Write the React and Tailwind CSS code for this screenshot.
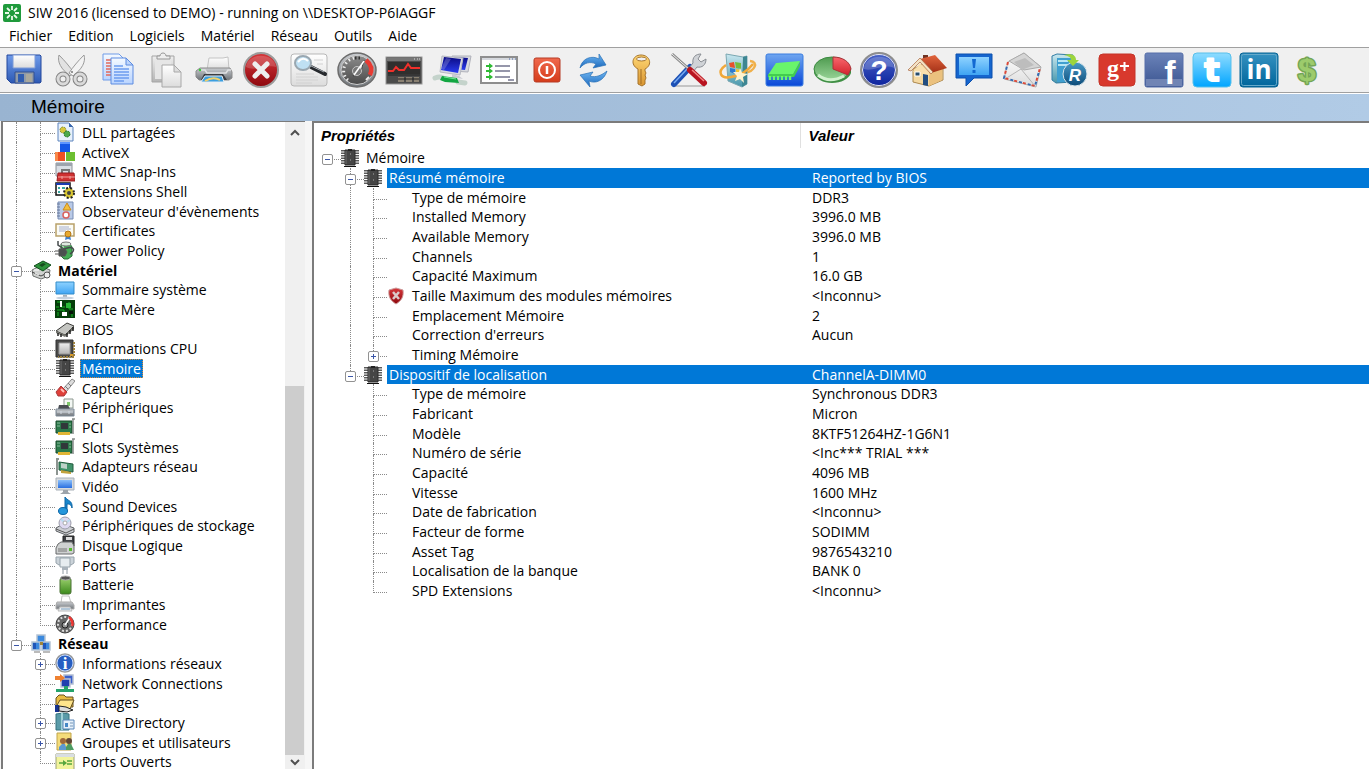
import { useState } from "react";

const toolbarIcons = [
  {
    label: "Enregistrer",
    art: (
      <>
        <path d="M3 3h33l1 1v26l-1 1H7l-4-4z" fill="url(#blue)" stroke="#23479c" />
        <path d="M9 3h22v13H9z" fill="url(#paper)" stroke="#7d9ad6" />
        <path d="M11 20h19v11H11z" fill="#8f9aa8" stroke="#33518f" />
        <path d="M14 22h6v8h-6z" fill="#2f5cb0" />
        <path d="M22 22h6v8h-6z" fill="#a9a89c" />
      </>
    ),
  },
  {
    label: "Couper",
    art: (
      <>
        <path d="M7 3c-2 7 2 14 11 21l4-3C18 15 13 9 7 3z" fill="#e2e2e2" stroke="#9a9a9a" />
        <path d="M32 3c2 7-2 14-11 21l-4-3C21 15 26 9 32 3z" fill="#f3f3f3" stroke="#9a9a9a" />
        <circle cx="11" cy="27" r="5" fill="none" stroke="#858585" strokeWidth="5" />
        <circle cx="11" cy="27" r="5" fill="none" stroke="#dadada" strokeWidth="3" />
        <circle cx="28" cy="27" r="5" fill="none" stroke="#858585" strokeWidth="5" />
        <circle cx="28" cy="27" r="5" fill="none" stroke="#dadada" strokeWidth="3" />
        <circle cx="20" cy="20" r="1" fill="#777" />
      </>
    ),
  },
  {
    label: "Copier",
    art: (
      <>
        <path d="M4 2h16l5 5v21H4z" fill="url(#sheet)" stroke="#6f9be8" />
        <path d="M7 8h7M7 11h5M7 14h5M7 17h5M7 20h5M7 23h5" stroke="#e2695c" strokeWidth="1.5" />
        <path d="M12 6h15l7 7v19H12z" fill="url(#sheet)" stroke="#5c8be0" />
        <path d="M27 6v7h7z" fill="#bcd4fb" stroke="#5c8be0" />
        <path d="M15 14h9M15 17h15M15 20h15M15 23h15M15 26h15M15 29h10" stroke="#6c9cf0" strokeWidth="1.3" />
      </>
    ),
  },
  {
    label: "Coller",
    art: (
      <>
        <path d="M5 4h22v26H5z" fill="url(#silver)" stroke="#a5a5a5" />
        <path d="M8 7h16v20H8z" fill="#e6e6e6" />
        <path d="M10 7V4h3c0-4 6-4 6 0h4v3z" fill="#eee" stroke="#979797" />
        <path d="M15 13h12l7 7v15H15z" fill="url(#paper)" stroke="#a8a8a8" />
        <path d="M27 13v7h7z" fill="#ddd" stroke="#a8a8a8" />
      </>
    ),
  },
  {
    label: "Imprimer",
    art: (
      <>
        <path d="M13 18 15 6h14l5-1 1 13z" fill="url(#paper)" stroke="#c4c4c4" />
        <path d="M6 16h30l2 4v6l-3 2H5l-3-3v-6z" fill="url(#steel)" stroke="#8b8b8b" />
        <path d="M5 18h6l2 3h19l2-3h3" fill="none" stroke="#dfe1e3" strokeWidth="1.5" />
        <path d="M10 22h19l4 6H7z" fill="#3a3e44" />
        <path d="M11 24h17l2 6H7z" fill="#3c9fe0" stroke="#e5edf5" />
        <path d="M11 29q8-5 15-1" stroke="#f0cf6a" strokeWidth="2" fill="none" />
        <circle cx="6" cy="18" r="1.2" fill="#32d232" />
      </>
    ),
  },
  {
    label: "Arrêter",
    art: (
      <>
        <circle cx="19" cy="18" r="17" fill="url(#darkred)" stroke="#9c9c9c" strokeWidth="2" />
        <path d="M4 15C6 0 32 0 34 15 25 12 13 20 4 15z" fill="#fff" opacity=".18" />
        <path d="m13 12 12 12M25 12 13 24" stroke="#eee" strokeWidth="5" strokeLinecap="round" />
      </>
    ),
  },
  {
    label: "Rechercher",
    art: (
      <>
        <rect x="2" y="2" width="36" height="32" rx="3" fill="url(#paper)" stroke="#b7b7b7" />
        <path d="M7 22h18M7 25h22M7 28h22M7 31h16M25 8h9M28 12h6" stroke="#d2d2d2" />
        <path d="m22 15 14 7" stroke="#26292d" strokeWidth="4" strokeLinecap="round" />
        <path d="m20 13 15 7" stroke="#a3aab0" />
        <ellipse cx="14" cy="11" rx="8" ry="7" fill="#bfe0f3" stroke="#9aa7b0" strokeWidth="2" />
        <path d="M9 10q5-6 10-1" stroke="#fff" strokeWidth="2" fill="none" />
      </>
    ),
  },
  {
    label: "Benchmark",
    art: (
      <>
        <ellipse cx="20" cy="18" rx="19" ry="17" fill="url(#steel)" stroke="#6c6c6c" strokeWidth="1.5" />
        <ellipse cx="20" cy="18" rx="16" ry="14.5" fill="url(#dial)" stroke="#cfcfcf" />
        <path d="M11 28C4 23 5 9 17 6" fill="none" stroke="#ededed" strokeWidth="3" strokeDasharray="1.5 3" />
        <path d="M18 6h7" stroke="#333" strokeWidth="3" strokeDasharray="1.5 2" />
        <path d="M29 8q8 7 4 15" fill="none" stroke="#e83a32" strokeWidth="4.5" />
        <path d="M29 28l3-3" stroke="#ededed" strokeWidth="2" />
        <path d="m16 24 11-16-4 15z" fill="#fff" stroke="#444" />
        <circle cx="20" cy="19" r="4.5" fill="#777" stroke="#c5c5c5" />
        <path d="m17 23 10-14" stroke="#fff" strokeWidth="1.5" />
      </>
    ),
  },
  {
    label: "Moniteur",
    art: (
      <>
        <rect x="2" y="5" width="36" height="27" fill="#4b4b4b" stroke="#979797" />
        <path d="M3 6h34v3H3z" fill="#777" />
        <path d="M30 7h1M33 7h1M35 7h1" stroke="#ddd" />
        <path d="M4 10h32v12H4z" fill="#302f2e" />
        <path d="M4 19h5l3-4 3 3h5l4-6 3 4h9" stroke="#f0302b" strokeWidth="2" fill="none" />
        <path d="M14 25h6v5h-6zM22 25h6v5h-6zM30 25h5v5h-5z" fill="#8a8172" />
        <path d="M4 23h32M14 27h21" stroke="#222" />
      </>
    ),
  },
  {
    label: "Réseau local",
    art: (
      <>
        <path d="M20 4 39 4l-3 16-16-1z" fill="#d7d9df" stroke="#b0b2ba" />
        <path d="m22 5 14 1-3 12-11-1z" fill="url(#navy)" />
        <path d="m10 4 21 2-3 17-20-3z" fill="#d7d9e1" stroke="#b7b9c2" />
        <path d="m12 5 17 2-3 14-17-3z" fill="url(#navy)" />
        <path d="m14 6 5 1-7 11-3-1z" fill="#fff" opacity=".2" />
        <path d="m20 22 7 2 4 3-11-2z" fill="#c8cad2" />
        <path d="M3 26q5-2 8 0M26 30l7 1" stroke="#c4d3cb" strokeWidth="5" fill="none" strokeLinecap="round" />
        <path d="m10 24 15 2 2 5-14-1-5-2z" fill="#12a642" />
        <path d="m12 25 12 2" stroke="#74e693" />
      </>
    ),
  },
  {
    label: "Liste",
    art: (
      <>
        <rect x="2" y="5" width="36" height="26" fill="#fff" stroke="#8e8e8e" strokeWidth="2" />
        <path d="M3 6h34v2H3z" fill="#d6d9de" />
        <path d="M30 7h1M33 7h1M36 7h1" stroke="#4b67a0" />
        <path d="M16 14h15M16 19h15M16 25h15M29 28h6" stroke="#73748f" strokeWidth="1.5" />
        <path d="M7 14h5M7 19h5M7 25h5" stroke="#2fba34" strokeWidth="2" />
        <path d="m10 11 4 3-4 3zm0 5 4 3-4 3zm0 6 4 3-4 3z" fill="#2fba34" />
      </>
    ),
  },
  {
    label: "Éteindre",
    art: (
      <>
        <rect x="7" y="6" width="26" height="24" rx="2" fill="url(#orange)" stroke="#b63b24" />
        <circle cx="20" cy="18" r="8" fill="none" stroke="#fff" strokeWidth="2" />
        <path d="M20 14v8" stroke="#fff" strokeWidth="2.5" />
      </>
    ),
  },
  {
    label: "Actualiser",
    art: (
      <>
        <path d="M6 16C8 6 18 3 25 7V2l7 11-13 3 3-4c-6-3-12-1-16 4z" fill="url(#sky)" stroke="#2870b6" strokeWidth=".7" />
        <path d="M33 19c-3 10-12 13-18 10l1 6L6 23l13-3-3 4c6 2 12-1 17-5z" fill="url(#sky)" stroke="#2870b6" strokeWidth=".7" />
      </>
    ),
  },
  {
    label: "Clé",
    art: (
      <>
        <path
          d="M16 17c-8-4-6-14 3-14s12 10 4 14v2l1 2-1 2 1 3-1 2v4l-3 2-4-2z"
          fill="url(#gold)"
          stroke="#a6742c"
        />
        <ellipse cx="19.500" cy="7" rx="5" ry="2" fill="#f0f0f0" stroke="#a6742c" />
        <path d="M19 17v15" stroke="#9f6d26" />
      </>
    ),
  },
  {
    label: "Outils",
    art: (
      <>
        <path d="M6 34h30" stroke="#c4c4c4" strokeWidth="2" />
        <path d="m5 32 16-17" stroke="#1d51b5" strokeWidth="6" strokeLinecap="round" />
        <path d="m5 31 14-15" stroke="#75aaf1" strokeWidth="1.5" />
        <path d="m20 16 4-5c-1-6 3-9 8-9l-3 5 3 3 5-3c0 6-4 9-9 8l-4 5z" fill="#d0d3d7" stroke="#8a8e94" />
        <path d="m3 2 18 16" stroke="#888" strokeWidth="3" />
        <path d="m3 2 18 16" stroke="#eee" />
        <path d="m21 18 14 13" stroke="#b81420" strokeWidth="6" strokeLinecap="round" />
        <path d="m23 18 12 11" stroke="#f18a87" strokeWidth="1.5" />
      </>
    ),
  },
  {
    label: "Logiciel",
    art: (
      <>
        <path d="M33 9C42 10 38 19 28 21" fill="none" stroke="#f0b04a" strokeWidth="2.5" />
        <path d="m9 2 17 3 4-1v28l-5 3-14-6z" fill="url(#teal)" stroke="#7aa7b1" />
        <path d="m26 5 4-1v28l-5 3z" fill="#3d8692" />
        <path d="m12 11 5-1 1 6-5-1z" fill="#e7512c" />
        <path d="m18 10 6 1v6l-5-1z" fill="#75bd3c" />
        <path d="m13 16 5 1v5l-5-2z" fill="#2d79d0" />
        <path d="m19 17 5 1v6l-5-2z" fill="#f3c332" />
        <path d="M9 13C-1 20 4 27 14 25c8-1 15-4 22-13" fill="none" stroke="#f0a83a" strokeWidth="2.5" />
        <path d="m23 16 2 5 6 1-5 3 1 6-4-4-5 2 2-5-4-4h6z" fill="#fff3cf" />
      </>
    ),
  },
  {
    label: "Mémoire",
    art: (
      <>
        <rect x="2" y="2" width="37" height="32" rx="2" fill="url(#royal)" stroke="#3b7de0" />
        <path d="m12 11 24-2-7 14H4z" fill="#69f56b" />
        <path d="M4 22h25l7-12v4l-6 11H4z" fill="#43cc4f" />
        <path d="M6 24v4M10 24v4M14 24v4M18 24v4M22 24v4M26 24v4" stroke="#6cf66c" strokeWidth="2.5" />
      </>
    ),
  },
  {
    label: "Statistiques",
    art: (
      <>
        <path d="M2 17v4c2 6 9 10 18 10s17-4 19-10v-4z" fill="#3f8f44" />
        <ellipse cx="20" cy="17" rx="18" ry="12" fill="url(#leaf)" stroke="#3b8a40" />
        <path d="M21 17V5c10 0 17 5 18 12l-3 6z" fill="url(#red)" stroke="#a9333a" />
        <path d="M6 23q11 9 26 1" fill="none" stroke="#d2f2cf" strokeWidth="3" />
      </>
    ),
  },
  {
    label: "Aide",
    art: (
      <>
        <ellipse cx="20" cy="18" rx="18" ry="17" fill="url(#navyball)" stroke="#8d8d8d" strokeWidth="2" />
        <ellipse cx="20" cy="18" rx="16.500" ry="15.500" fill="none" stroke="#e7e7ef" />
        <path d="M5 17C6 1 34 1 35 16 25 11 14 20 5 17z" fill="#fff" opacity=".2" />
        <text x="20" y="28" textAnchor="middle" fontSize="28" fontWeight="700" fontFamily="Liberation Sans" fill="#fff">?</text>
      </>
    ),
  },
  {
    label: "Accueil",
    art: (
      <>
        <path d="M6 17v13l16 4 14-6V16L24 8z" fill="#f5d9a2" stroke="#ad8950" />
        <path d="m22 20 13-5v13l-13 6z" fill="#ebc17e" />
        <path d="M16 3h5v8h-5z" fill="#703322" />
        <path d="m13 7 15-4 12 13-16 5z" fill="url(#roof)" />
        <path d="M13 6 1 18l3 1 9-9 11 12 2-2z" fill="#f3e2c4" stroke="#a9653f" strokeWidth=".7" />
        <path d="m13 11 10 12-17-3z" fill="#f8dfae" />
        <path d="m16 22 5 1v11l-5-1z" fill="#234e81" />
        <path d="M8 20h5v4H8z" fill="#294c6b" stroke="#fff" />
      </>
    ),
  },
  {
    label: "Commentaires",
    art: (
      <>
        <path d="M2 2h36v24H20l-8 8v-8H2z" fill="#1565ce" stroke="#0c50ad" />
        <path d="M5 5h30v18H5z" fill="url(#cyan)" />
        <path d="M18 7h4l-1 9h-2zM18.500 18h3v3h-3z" fill="#1269d2" />
      </>
    ),
  },
  {
    label: "Courriel",
    art: (
      <>
        <path d="m22 1 17 14-5 20L2 27 6 10z" fill="url(#paper)" stroke="#b0b0b0" />
        <path d="m22 1 17 14-17 3L7 9z" fill="#d5d5d5" stroke="#aaa" />
        <path d="m12 10 11-4 9 7-12 5z" fill="#bdbdbd" />
        <path d="M3 27 19 17l14 17" stroke="#b5b5b5" fill="none" />
        <path d="m6 10-4 16 31 8 5-18" fill="none" stroke="#dc4938" strokeWidth="2" strokeDasharray="3 6" />
        <path d="m6 10-4 16 31 8 5-18" fill="none" stroke="#346bb2" strokeWidth="2" strokeDasharray="3 6" strokeDashoffset="4" />
      </>
    ),
  },
  {
    label: "Registre",
    art: (
      <>
        <path d="m3 4 5-2 16 1v27l-17 1-4-3z" fill="url(#teal)" stroke="#327da4" />
        <path d="M8 6h14v24H8z" fill="#3f9fd0" />
        <path d="M9 9h10M9 13h10" stroke="#b6e6f5" strokeWidth="2" />
        <circle cx="26" cy="22" r="12" fill="url(#ocean)" stroke="#d7e3e9" />
        <text x="26" y="29" textAnchor="middle" fontSize="17" fontStyle="italic" fontWeight="700" fontFamily="Liberation Sans" fill="#fff">
          R
        </text>
        <path d="M15 3c9-2 12 1 12 5h3l-6 6-6-6h4c0-3-3-4-7-5z" fill="#9cd43d" />
      </>
    ),
  },
  {
    label: "Google+",
    art: (
      <>
        <rect x="2" y="2" width="36" height="32" rx="4" fill="#d8392d" stroke="#c43428" />
        <text x="16" y="24" textAnchor="middle" fontSize="24" fontFamily="Liberation Serif" fontWeight="700" fill="#fff">
          g
        </text>
        <path d="M23 14h9M27.500 10v9" stroke="#fff" strokeWidth="2" />
      </>
    ),
  },
  {
    label: "Facebook",
    art: (
      <>
        <rect x="1" y="1" width="38" height="34" rx="2" fill="url(#fb)" stroke="#566fa9" />
        <path d="M2 27h36v7H2z" fill="#7084b4" />
        <text x="26" y="32" textAnchor="middle" fontSize="34" fontWeight="700" fontFamily="Liberation Sans" fill="#fff">
          f
        </text>
      </>
    ),
  },
  {
    label: "Twitter",
    art: (
      <>
        <rect x="1" y="1" width="38" height="34" rx="4" fill="url(#tw)" stroke="#59c0eb" />
        <text
          x="20"
          y="29"
          textAnchor="middle"
          fontSize="32"
          fontWeight="700"
          fontFamily="DejaVu Sans"
          fill="#fff"
          stroke="#fff"
          strokeWidth="2"
          strokeLinejoin="round"
        >
          t
        </text>
      </>
    ),
  },
  {
    label: "LinkedIn",
    art: (
      <>
        <rect x="1" y="1" width="38" height="34" rx="3" fill="url(#li)" stroke="#096494" />
        <rect x="2.500" y="2.500" width="35" height="31" rx="2" fill="none" stroke="#66aacb" />
        <text x="20" y="27" textAnchor="middle" fontSize="26" fontWeight="700" fill="#fff">in</text>
      </>
    ),
  },
  {
    label: "Acheter",
    art: (
      <text
        x="20"
        y="29"
        textAnchor="middle"
        fontSize="32"
        fontWeight="700"
        fontFamily="Liberation Sans"
        fill="#9ccb6c"
        stroke="#74a556"
        strokeWidth="3"
        strokeLinejoin="round"
        paintOrder="stroke"
      >
        $
      </text>
    ),
  },
];

const treeIcons = {
  dll: (
    <>
      <path d="M3 1h11l4 4v14H3z" fill="#e8f1fc" stroke="#5d84bd" />
      <path d="M14 1v4h4z" fill="#3a68ad" />
      <circle cx="8" cy="8" r="3" fill="#d8c73c" stroke="#86912f" strokeDasharray="2 1" />
      <circle cx="12" cy="12" r="3" fill="#4da94a" stroke="#25782a" strokeDasharray="2 1" />
    </>
  ),
  activex: (
    <>
      <path d="M5 0h10v10H5z" fill="#1558e6" />
      <path d="M0 10h10v9H0z" fill="#ee5124" />
      <path d="M11 10h9v9h-9z" fill="#6cbf31" />
      <path d="M5 0h10v2H5z" fill="#5c95ff" />
      <path d="M0 10h3v9H0z" fill="#f98a4a" />
    </>
  ),
  mmc: (
    <>
      <path d="M1 1h16v13H1z" fill="#dadfe5" stroke="#8d9299" />
      <path d="M1 1h16v3H1z" fill="#9da4ad" />
      <path d="M7 11V8h7v3" fill="none" stroke="#777" strokeWidth="2" />
      <path d="M3 11h16l1 8H2z" fill="#cf3131" stroke="#981d20" />
      <path d="M3 15h17M7 14v3M15 14v3" stroke="#f3a4a0" />
    </>
  ),
  shell: (
    <>
      <path d="M1 2h14v12H1z" fill="#fff" stroke="#111" strokeWidth="1.5" />
      <path d="M1 2h14v2H1z" fill="#1b3bb0" />
      <path d="M3 6h2v2H3zM3 10h2v2H3zM7 6h3v2H7z" fill="#39a7a0" />
      <circle cx="14" cy="12" r="5" fill="#dac733" stroke="#222" strokeWidth="2" strokeDasharray="2 2" />
      <circle cx="14" cy="12" r="2" fill="#444" />
    </>
  ),
  events: (
    <>
      <path d="M3 1h15v17H3z" fill="#b9cae7" stroke="#788db4" />
      <path d="M2 3h3M2 6h3M2 9h3M2 12h3M2 15h3" stroke="#68789a" />
      <path d="m12 2 4 7H8z" fill="#f4bf3c" stroke="#c98b21" />
      <circle cx="11" cy="14" r="3" fill="#fff" stroke="#d9625f" strokeWidth="1.5" />
    </>
  ),
  cert: (
    <>
      <path d="M1 3h18v12H1z" fill="#fbfbf4" stroke="#b9a16a" strokeWidth="1.5" />
      <path d="M4 6h10M4 8h12M4 10h7" stroke="#a6afcd" />
      <path d="m11 14-1 5 3-1 3 1-1-5z" fill="#3c80d0" />
      <circle cx="13" cy="13" r="3" fill="#e7a92f" stroke="#b57614" />
    </>
  ),
  power: (
    <>
      <path d="M6 4h9l2 3v9l-4 3H9l-3-3z" fill="#44ad55" stroke="#286d36" />
      <path d="M8 5v11" stroke="#a8e3b0" strokeWidth="2" />
      <ellipse cx="11" cy="4" rx="5" ry="2" fill="#dcebdd" stroke="#777" />
      <path d="M3 1v4l6 4c9-4 13 1 6 5" stroke="#464b4c" strokeWidth="1.5" fill="none" />
      <path d="M4 9h6l2 3-2 4H4zM0 11h4M0 14h4" fill="#4a504f" stroke="#555" />
    </>
  ),
  hardware: (
    <>
      <path d="m1 10 8-4 10 4-1 6-8 3-8-3z" fill="#cfd1cf" stroke="#6e716f" />
      <path d="m1 12 9 4 8-4" stroke="#444" fill="none" />
      <path d="m3 6 9-5 8 4-8 6z" fill="#2d923b" stroke="#124e1c" />
      <path d="m8 5 4-2 3 1-4 3z" fill="#174c1e" />
      <path d="M3 10h5M4 13l4 2" stroke="#fff" />
      <circle cx="16" cy="15" r="3" fill="#ededed" stroke="#555" />
    </>
  ),
  screen: (
    <>
      <path d="M1 2h18v12H1z" fill="url(#cyan)" stroke="#328cc9" />
      <path d="M8 15h4v2H8z" fill="#a7afb8" />
      <ellipse cx="10" cy="18" rx="9" ry="1.5" fill="#c5d1de" />
    </>
  ),
  board: (
    <>
      <path d="M0 1h20v18H0z" fill="#063e0b" />
      <path d="M2 3h4v5h4M2 11h7v6M14 3v7h4M3 17v-4M17 13v5M1 8h3" stroke="#16b427" fill="none" />
      <path d="M11 4h5v5h-5z" fill="#2bb838" />
      <path d="M5 2h2v6H5zM7 13h5v4H7z" fill="#fff" />
      <path d="M14 12h4v3h-4z" fill="#071108" />
    </>
  ),
  bios: (
    <>
      <path d="m1 12 11-8 7 3-9 9z" fill="#c4c5c1" stroke="#3b3b38" />
      <path d="m1 12 9 4 9-9v3l-9 8-9-4z" fill="#75766f" />
      <path d="M3 14v3M6 15v3M12 14v4M15 11v4M18 8v4" stroke="#222" strokeWidth="1.5" />
    </>
  ),
  cpu: (
    <>
      <path d="M1 1h17v17H1z" fill="#4b4b4a" stroke="#333" />
      <path d="M19 3v15H3" stroke="#9c8140" strokeWidth="2" strokeDasharray="2 1" fill="none" />
      <path d="M4 4h11v11H4z" fill="url(#silver)" stroke="#999" />
      <path d="M15 15h3v2h-3z" fill="#d79a2a" />
    </>
  ),
  memory: (
    <>
      <path d="M3 2v15M17 2v15" stroke="#5c5c5c" strokeWidth="4" strokeDasharray="1.5 1" />
      <path d="M5 2h10v15H5z" fill="#454545" stroke="#2c2c2c" />
      <path d="M8 1h4v2H8z" fill="#222" />
      <path d="M6 3v13" stroke="#6e6e6e" />
      <path d="M10 6h1M10 12h1" stroke="#aaa" />
      <path d="M4 18h12v1H4z" fill="#111" />
    </>
  ),
  sensor: (
    <>
      <path d="M8 11 17 1l3 2-9 11z" fill="#ddd" stroke="#888" />
      <path d="m10 8 3 3M13 5l3 3" stroke="#777" />
      <path d="m6 8 6 6-3 4H3l-2-4z" fill="#e0403a" stroke="#a9383a" />
      <path d="m6 11 3 3" stroke="#ffc0b8" strokeWidth="2" />
    </>
  ),
  devices: (
    <>
      <path d="M9 1h9v9H9z" fill="#f3f7f4" stroke="#8d9890" />
      <path d="M12 4h3v4h-3z" fill="#7ec76c" />
      <path d="M4 7h9l2 4H3z" fill="#4a4e54" />
      <path d="M1 11h18v7H1z" fill="url(#steel)" stroke="#7f8b98" />
      <path d="M2 14h16M6 13v3M14 13v3" stroke="#d3dae1" />
    </>
  ),
  pci: (
    <>
      <path d="M1 4h16v12H1z" fill="#2c7a4b" stroke="#174a2b" />
      <path d="M6 6h7v6H6z" fill="#30383a" />
      <path d="M2 6h3M2 9h3M14 7h2M14 10h2" stroke="#86b79a" />
      <path d="M3 15h12v3H3z" fill="#e0b535" />
      <path d="M18 2v15M17 2h3" stroke="#878c8a" strokeWidth="1.5" />
    </>
  ),
  lan: (
    <>
      <path d="M2 1v17M1 2h3" stroke="#8d9591" strokeWidth="2" />
      <path d="m4 5 14 2v8L4 13z" fill="#41936b" stroke="#235c3f" />
      <path d="m6 6 6 1v5l-6-1z" fill="#bdd1c8" />
      <path d="m6 13 10 2v2L6 16z" fill="#c2a33d" />
    </>
  ),
  video: (
    <>
      <path d="M1 2h18v12H1z" fill="#d7dadd" stroke="#a9b1b9" />
      <path d="M3 4h14v8H3z" fill="url(#monitor)" />
      <path d="M8 14h5v2l3 2H5l3-2z" fill="#9da4ab" />
    </>
  ),
  sound: (
    <>
      <path d="M10 1c2 4 8 3 7 11-1-4-3-4-5-4v7h-2z" fill="#1886cc" stroke="#0c65a5" />
      <ellipse cx="8" cy="15" rx="4.500" ry="3.500" fill="#2596db" stroke="#0c65a5" />
    </>
  ),
  storage: (
    <>
      <path d="m1 12 7-4 11 4v4l-8 3-10-4z" fill="#ced0d4" stroke="#5c5f63" />
      <path d="m1 13 10 4 8-4" stroke="#555" fill="none" />
      <circle cx="10" cy="7" r="6" fill="#dedaf1" stroke="#9c9daa" />
      <path d="m10 7-4-4M10 7l5-3" stroke="#b9dcf0" strokeWidth="2" />
      <circle cx="10" cy="7" r="2" fill="#fff" stroke="#aaa" />
    </>
  ),
  disk: (
    <>
      <path d="M8 1h11v10H8z" fill="#3e4044" stroke="#222" />
      <path d="M11 2h6v3h-6z" fill="#ddd" />
      <path d="m3 9 3-2h11l2 4v7l-2 1H1v-6z" fill="#cfd1d1" stroke="#67696a" />
      <path d="M3 14h9M3 16h9" stroke="#777" />
      <path d="M14 13h3v3h-3z" fill="#55b72d" />
    </>
  ),
  ports: (
    <>
      <path d="M1 2h18v6l-3 2H4L1 8z" fill="#cbd3d9" stroke="#97a3ab" />
      <path d="M5 3h10v9H5z" fill="#e7edf0" stroke="#97a3ab" />
      <path d="M7 12h6v3H7z" fill="#aab4bc" />
      <path d="M8 15v4M12 15v4" stroke="#909ba3" />
    </>
  ),
  battery: (
    <>
      <rect x="5" y="3" width="11" height="16" rx="2" fill="url(#battery)" stroke="#487032" />
      <ellipse cx="10.500" cy="3" rx="5" ry="2" fill="#555" stroke="#aaa" />
    </>
  ),
  printer: (
    <>
      <path d="m6 9 1-7h7l2 7z" fill="#fff" stroke="#c3c3c3" />
      <path d="M2 8h15l2 3v4H1v-4z" fill="url(#steel)" stroke="#aaa" />
      <path d="M5 13h10l2 4H3z" fill="#e9edf1" stroke="#bbb" />
      <path d="M6 15h9" stroke="#7a9fbe" />
    </>
  ),
  gauge: (
    <>
      <circle cx="10" cy="10" r="9" fill="#666" stroke="#444" />
      <circle cx="10" cy="10" r="7" fill="none" stroke="#ddd" strokeWidth="2" strokeDasharray="2" />
      <path d="M14 3q5 5 3 9" fill="none" stroke="#ee3834" strokeWidth="2.5" />
      <circle cx="10" cy="11" r="3" fill="#999" stroke="#222" />
      <path d="m10 11 4-6" stroke="#fff" strokeWidth="1.5" />
    </>
  ),
  network: (
    <>
      <path d="M6 1h8v7H6zM1 8h8v8H1zM11 8h8v8h-8z" fill="#3b89de" stroke="#b5c3d4" strokeWidth="1.5" />
      <path d="M2 9h3v6H2zM12 9h3v6h-3z" fill="#1f56ba" />
      <path d="M9 8h3v3H9z" fill="#a18539" />
      <path d="M3 17h6v2H3zM12 17h7v2h-7z" fill="#bbb" />
    </>
  ),
  info: (
    <>
      <circle cx="10" cy="10" r="9" fill="#285fc2" stroke="#999" strokeWidth="1.5" />
      <circle cx="10" cy="10" r="8" fill="none" stroke="#c8dafa" />
      <text x="10" y="16" textAnchor="middle" fontSize="17" fontFamily="Liberation Serif" fontWeight="700" fill="#fff">
        i
      </text>
    </>
  ),
  connections: (
    <>
      <path d="M9 2h9v9H9z" fill="#3c61cb" stroke="#b3bdd2" strokeWidth="1.5" />
      <path d="M6 6h9v8H6z" fill="#203faf" stroke="#bfc6d8" strokeWidth="1.5" />
      <path d="M0 3h5V1l5 4-5 4V7H0z" fill="#ef8131" />
      <path d="M9 13h4v3h6v3H1v-3h8z" fill="#25a36b" />
    </>
  ),
  shares: (
    <>
      <path d="m1 5 3-3h5l2 2h7v10H1z" fill="#e9bc43" stroke="#665121" />
      <path d="m1 14 4-7h14l-4 9H1z" fill="#ffe58c" stroke="#665121" />
      <path d="M0 12h4v7H0z" fill="#163290" />
      <path d="m4 13 7 1 7 3-6 2-8-1z" fill="#ddd" stroke="#222" />
    </>
  ),
  directory: (
    <>
      <path d="m1 2 7-1 6 1v16H1z" fill="#5a9ba8" stroke="#34737f" />
      <path d="M7 1v17" stroke="#9fd0d7" strokeWidth="2" />
      <path d="M8 8h11v9H8z" fill="#e6f1fb" stroke="#5a87b9" />
      <path d="M10 11h3v4h-3z" fill="#4687c6" />
      <path d="M15 11h3M15 14h3" stroke="#7997b7" />
    </>
  ),
  users: (
    <>
      <path d="M2 1h14v17H2z" fill="#f4dc7a" stroke="#c0a44b" />
      <circle cx="8" cy="9" r="3" fill="#9f693a" />
      <path d="M4 18v-3l3-3h3l2 6z" fill="#5c98d0" />
      <circle cx="14" cy="9" r="3" fill="#624736" />
      <path d="M11 18v-3l2-3h3l3 6z" fill="#4d9b62" />
    </>
  ),
  openports: (
    <>
      <path d="M1 2h18v17H1z" fill="#f2f49b" stroke="#9a9f7b" />
      <path d="M1 2h18v3H1z" fill="#d9dee2" />
      <path d="M4 11h6M12 9h5M12 12h5" stroke="#56a53e" strokeWidth="1.5" />
      <path d="m8 8 4 3-4 3z" fill="#56a53e" />
    </>
  ),
  shield: (
    <>
      <path d="m10 2 7 2c1 7-2 11-7 14C5 15 2 11 3 4z" fill="url(#darkred)" stroke="#c99" />
      <path d="m7 6 6 7M13 6l-6 7" stroke="#dcc9c9" strokeWidth="2.5" />
    </>
  ),
};

// guides: "v" vertical line, "t" branch, "l" last branch, "o" root branch, "" empty
const sections = [
  { text: "DLL partagées", icon: "dll", guides: ["v", "t"] },
  { text: "ActiveX", icon: "activex", guides: ["v", "t"] },
  { text: "MMC Snap-Ins", icon: "mmc", guides: ["v", "t"] },
  { text: "Extensions Shell", icon: "shell", guides: ["v", "t"] },
  { text: "Observateur d'évènements", icon: "events", guides: ["v", "t"] },
  { text: "Certificates", icon: "cert", guides: ["v", "t"] },
  { text: "Power Policy", icon: "power", guides: ["v", "l"] },
  { text: "Matériel", icon: "hardware", guides: ["t"], box: "-", bold: true },
  { text: "Sommaire système", icon: "screen", guides: ["v", "t"] },
  { text: "Carte Mère", icon: "board", guides: ["v", "t"] },
  { text: "BIOS", icon: "bios", guides: ["v", "t"] },
  { text: "Informations CPU", icon: "cpu", guides: ["v", "t"] },
  { text: "Mémoire", icon: "memory", guides: ["v", "t"] },
  { text: "Capteurs", icon: "sensor", guides: ["v", "t"] },
  { text: "Périphériques", icon: "devices", guides: ["v", "t"] },
  { text: "PCI", icon: "pci", guides: ["v", "t"] },
  { text: "Slots Systèmes", icon: "pci", guides: ["v", "t"] },
  { text: "Adapteurs réseau", icon: "lan", guides: ["v", "t"] },
  { text: "Vidéo", icon: "video", guides: ["v", "t"] },
  { text: "Sound Devices", icon: "sound", guides: ["v", "t"] },
  { text: "Périphériques de stockage", icon: "storage", guides: ["v", "t"] },
  { text: "Disque Logique", icon: "disk", guides: ["v", "t"] },
  { text: "Ports", icon: "ports", guides: ["v", "t"] },
  { text: "Batterie", icon: "battery", guides: ["v", "t"] },
  { text: "Imprimantes", icon: "printer", guides: ["v", "t"] },
  { text: "Performance", icon: "gauge", guides: ["v", "l"] },
  { text: "Réseau", icon: "network", guides: ["l"], box: "-", bold: true },
  { text: "Informations réseaux", icon: "info", guides: ["", "t"], box: "+" },
  { text: "Network Connections", icon: "connections", guides: ["", "t"] },
  { text: "Partages", icon: "shares", guides: ["", "t"] },
  { text: "Active Directory", icon: "directory", guides: ["", "t"], box: "+" },
  { text: "Groupes et utilisateurs", icon: "users", guides: ["", "t"], box: "+" },
  { text: "Ports Ouverts", icon: "openports", guides: ["", "l"] },
];

const properties = [
  { name: "Mémoire", icon: "memory", guides: ["o"], box: "-" },
  { name: "Résumé mémoire", value: "Reported by BIOS", icon: "memory", guides: ["", "t"], box: "-", selected: true },
  { name: "Type de mémoire", value: "DDR3", guides: ["", "v", "t"] },
  { name: "Installed Memory", value: "3996.0 MB", guides: ["", "v", "t"] },
  { name: "Available Memory", value: "3996.0 MB", guides: ["", "v", "t"] },
  { name: "Channels", value: "1", guides: ["", "v", "t"] },
  { name: "Capacité Maximum", value: "16.0 GB", guides: ["", "v", "t"] },
  { name: "Taille Maximum des modules mémoires", value: "<Inconnu>", icon: "shield", guides: ["", "v", "t"] },
  { name: "Emplacement Mémoire", value: "2", guides: ["", "v", "t"] },
  { name: "Correction d'erreurs", value: "Aucun", guides: ["", "v", "t"] },
  { name: "Timing Mémoire", value: "", guides: ["", "v", "l"], box: "+" },
  { name: "Dispositif de localisation", value: "ChannelA-DIMM0", icon: "memory", guides: ["", "l"], box: "-", selected: true },
  { name: "Type de mémoire", value: "Synchronous DDR3", guides: ["", "", "t"] },
  { name: "Fabricant", value: "Micron", guides: ["", "", "t"] },
  { name: "Modèle", value: "8KTF51264HZ-1G6N1", guides: ["", "", "t"] },
  { name: "Numéro de série", value: "<Inc*** TRIAL ***", guides: ["", "", "t"] },
  { name: "Capacité", value: "4096 MB", guides: ["", "", "t"] },
  { name: "Vitesse", value: "1600 MHz", guides: ["", "", "t"] },
  { name: "Date de fabrication", value: "<Inconnu>", guides: ["", "", "t"] },
  { name: "Facteur de forme", value: "SODIMM", guides: ["", "", "t"] },
  { name: "Asset Tag", value: "9876543210", guides: ["", "", "t"] },
  { name: "Localisation de la banque", value: "BANK 0", guides: ["", "", "t"] },
  { name: "SPD Extensions", value: "<Inconnu>", guides: ["", "", "l"] },
];

const menus = ["Fichier", "Edition", "Logiciels", "Matériel", "Réseau", "Outils", "Aide"];

const gradients = {
  blue: ["#6f9bea", "#2c59b4"],
  paper: ["#ffffff", "#dcdcdc"],
  sheet: ["#f4f9ff", "#b9d4ff"],
  silver: ["#efefef", "#b4b4b4"],
  steel: ["#c9ccd0", "#6f7479"],
  darkred: ["#d7373b", "#8d070d"],
  dial: ["#8d8d8d", "#4a4a4a"],
  navy: ["#0b0b83", "#2a3df0"],
  orange: ["#f0694d", "#d53c1a"],
  sky: ["#6fb6f2", "#1c69bd"],
  gold: ["#ffd774", "#d99530"],
  teal: ["#c9e8f0", "#4796ab"],
  royal: ["#6fa6f0", "#0847d8"],
  monitor: ["#8cc0fa", "#2a6fe0"],
  leaf: ["#4f9b50", "#9bd79a"],
  red: ["#f9676d", "#d3232c"],
  navyball: ["#4a65c9", "#0b219c"],
  roof: ["#e2653d", "#a33017"],
  cyan: ["#8ed2ff", "#3fa4f3"],
  ocean: ["#4a9bc7", "#0d4b78"],
  fb: ["#6b83b9", "#3b5591"],
  tw: ["#8fdcff", "#00a5ff"],
  li: ["#3692c1", "#00659b"],
  battery: ["#9bd06d", "#3c8a1c"],
};

const Gradients = () => (
  <svg className="absolute size-0" aria-hidden="true">
    <defs>
      {Object.entries(gradients).map(([id, [from, to]]) => (
        <linearGradient key={id} id={id} x1="0" y1="0" x2="0" y2="1">
          <stop offset="0" stopColor={from} />
          <stop offset="1" stopColor={to} />
        </linearGradient>
      ))}
    </defs>
  </svg>
);

const Expander = ({ sign }) => (
  <button
    aria-label={sign === "-" ? "Réduire" : "Développer"}
    className="absolute top-1.5 left-1 flex size-[11px] items-center justify-center rounded-xs border border-[#929292] bg-white"
  >
    <svg viewBox="0 0 9 9" className="size-[9px] shrink-0">
      <path d={sign === "-" ? "M2 4.500h5" : "M2 4.500h5M4.500 2v5"} stroke="#3b56a8" />
    </svg>
  </button>
);

const Guide = ({ kind, box, wide }) => (
  <span className={`relative flex shrink-0 flex-col self-stretch pl-[9px] ${wide ? "w-6" : "w-[23px]"}`}>
    {kind === "v" && <span className="flex-1 border-l border-dotted border-[#8a8a8a]" />}
    {(kind === "t" || kind === "l") && (
      <span className="h-3 border-b border-l border-dotted border-[#8a8a8a]" />
    )}
    {kind === "o" && <span className="h-3 border-b border-dotted border-[#8a8a8a]" />}
    {kind === "t" && <span className="flex-1 border-l border-dotted border-[#8a8a8a]" />}
    {box && <Expander sign={box} />}
  </span>
);

const Guides = ({ kinds, box, wide }) =>
  kinds.map((kind, i) => (
    <Guide key={i} kind={kind} wide={wide} box={i === kinds.length - 1 ? box : null} />
  ));

const Titlebar = () => (
  <header className="flex h-[26px] shrink-0 items-center gap-[7px] pl-[3px]">
    <svg viewBox="0 0 18 18" className="size-[18px]">
      <rect width="18" height="18" rx="2" fill="#1f9a3c" />
      <path
        d="M9 2v4M9 12v4M2 9h4M12 9h4M4 4l3 3M11 11l3 3M14 4l-3 3M7 11l-3 3"
        stroke="#e9fbe9"
        strokeWidth="1.8"
      />
    </svg>
    <h1>SIW 2016 (licensed to DEMO) - running on \\DESKTOP-P6IAGGF</h1>
  </header>
);

const Toolbar = () => (
  <div className="flex h-[46px] shrink-0 items-center border-y border-[#a0a0a0] bg-[#f0f0f0]">
    {toolbarIcons.map((icon) => (
      <button
        key={icon.label}
        aria-label={icon.label}
        className="flex w-12 shrink-0 justify-center even:w-[47px]"
      >
        <svg viewBox="0 0 40 36" className="h-9 w-10 overflow-visible">
          {icon.art}
        </svg>
      </button>
    ))}
  </div>
);

const Scrollbar = () => (
  <div className="flex w-5 shrink-0 flex-col bg-[#f0f0f0]">
    <button aria-label="Défiler vers le haut" className="flex h-5 shrink-0 items-center justify-center">
      <svg viewBox="0 0 10 7" className="h-[7px] w-2.5">
        <path d="m1 6 4-4 4 4" fill="none" stroke="#505050" strokeWidth="2" />
      </svg>
    </button>
    <div className="grow-[243]" />
    <div className="mr-px grow-[368] bg-[#cdcdcd]" />
    <button aria-label="Défiler vers le bas" className="flex h-3.5 shrink-0 items-center justify-center">
      <svg viewBox="0 0 10 7" className="h-[7px] w-2.5">
        <path d="m1 1 4 4 4-4" fill="none" stroke="#505050" strokeWidth="2" />
      </svg>
    </button>
  </div>
);

const Sidebar = ({ current, onSelect }) => (
  <nav className="ml-px flex w-[304px] shrink-0 border-t border-l-2 border-[#7b7b7b] bg-white">
    <ul className="min-w-0 flex-1 overflow-hidden pl-1">
      {sections.map((row) => (
        <li key={row.text} className="flex h-5 items-center nth-[3n]:h-[19px]">
          <Guides kinds={row.guides} box={row.box} wide />
          <svg viewBox="0 0 20 20" className="mr-[5px] size-5 shrink-0">
            {treeIcons[row.icon]}
          </svg>
          <button
            onClick={() => onSelect(row.text)}
            className={`px-0.5 leading-[19px] whitespace-nowrap ${row.bold ? "font-bold" : ""} ${
              current === row.text
                ? "bg-[#0078d7] text-white outline-1 -outline-offset-1 outline-[#e08a35] outline-dotted"
                : ""
            }`}
          >
            {row.text}
          </button>
        </li>
      ))}
    </ul>
    <Scrollbar />
  </nav>
);

const PropertyTable = () => (
  <main className="min-w-0 flex-1 overflow-hidden border-t-2 border-l-2 border-[#7b7b7b] bg-white">
    <table className="w-full table-fixed border-collapse">
      <thead>
        <tr className="h-[25px] text-left font-['Liberation_Sans',sans-serif] text-[15px] italic">
          <th className="w-[486px] border-r border-[#e0e0e0] p-0 pl-[7px]">Propriétés</th>
          <th className="p-0 pl-2">Valeur</th>
        </tr>
      </thead>
      <tbody>
        {properties.map((row, i) => (
          <tr key={i} className="h-5 nth-[3n]:h-[19px]">
            <td className="h-[inherit] p-0">
              <div className="flex h-full items-center pl-1">
                <Guides kinds={row.guides} box={row.box} />
                <span className="mr-[5px] w-[18px] shrink-0">
                  {row.icon && (
                    <svg viewBox="1 1 18 18" className="size-[18px]">
                      {treeIcons[row.icon]}
                    </svg>
                  )}
                </span>
                <span
                  className={`flex-1 self-stretch pl-0.5 leading-[19px] whitespace-nowrap ${
                    row.selected ? "bg-[#0078d7] text-white" : ""
                  }`}
                >
                  {row.name}
                </span>
              </div>
            </td>
            <td
              className={`p-0 pl-3 align-top leading-[19px] whitespace-nowrap ${
                row.selected ? "bg-[#0078d7] text-white" : ""
              }`}
            >
              {row.value}
            </td>
          </tr>
        ))}
      </tbody>
    </table>
  </main>
);

const App = () => {
  const [current, setCurrent] = useState("Mémoire");

  return (
    <div className="flex h-screen flex-col overflow-hidden bg-white font-['Open_Sans','Noto_Sans',sans-serif] text-sm text-black">
      <Gradients />
      <Titlebar />
      <div className="flex h-[21px] shrink-0 items-start pl-px">
        {menus.map((menu) => (
          <button key={menu} className="px-2 leading-5">
            {menu}
          </button>
        ))}
      </div>
      <Toolbar />
      <h2 className="mt-px flex h-[27px] shrink-0 items-center bg-linear-to-r from-[#99b4d1] to-[#b1cbe6] pb-0.5 pl-[31px] font-['Liberation_Sans',sans-serif] text-[19px]">
        Mémoire
      </h2>
      <div className="flex min-h-0 flex-1 gap-[7px] bg-[#f6f6f6]">
        <Sidebar current={current} onSelect={setCurrent} />
        <PropertyTable />
      </div>
    </div>
  );
};

export default App;
